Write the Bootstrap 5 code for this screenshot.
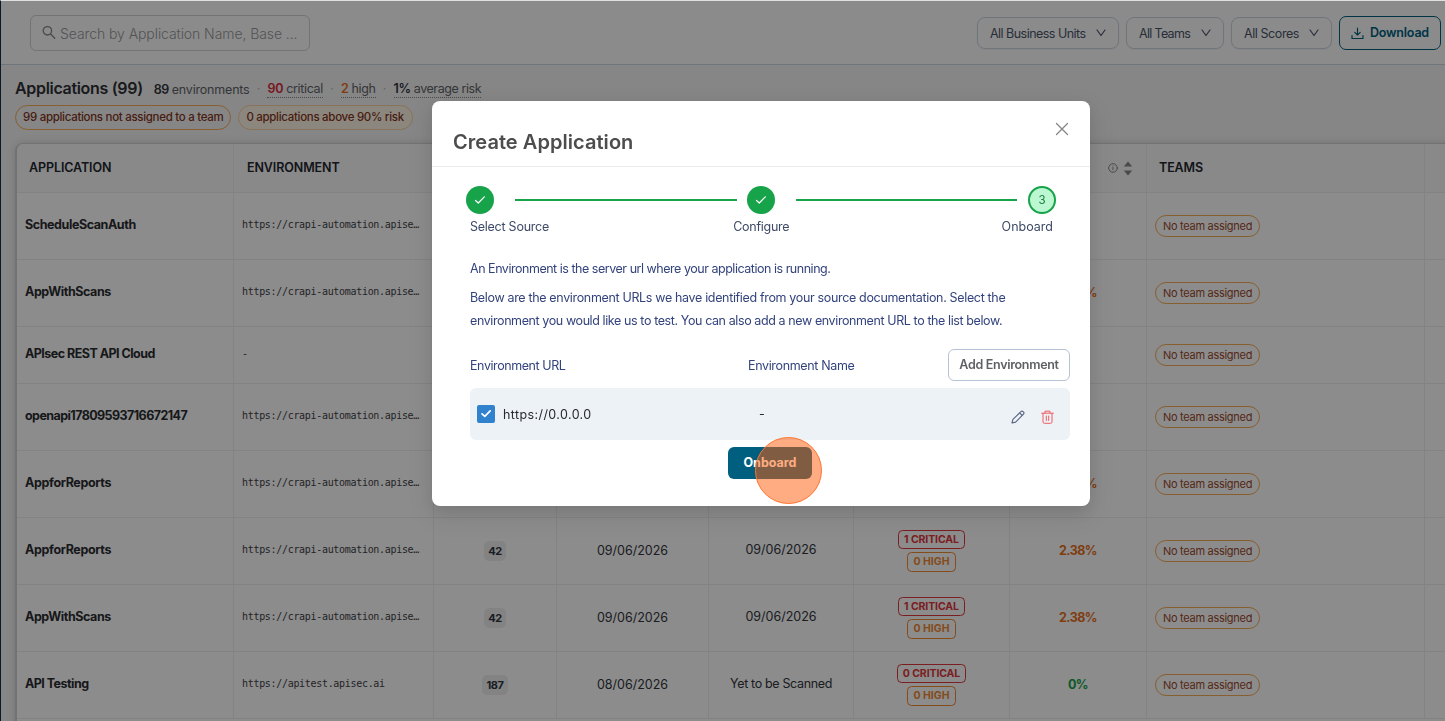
<!DOCTYPE html>
<html lang="en">
<head>
<meta charset="utf-8">
<meta name="viewport" content="width=device-width, initial-scale=1">
<title>Applications</title>
<link href="https://cdn.jsdelivr.net/npm/bootstrap@5.3.0/dist/css/bootstrap.min.css" rel="stylesheet">
<style>
  html, body { height: 100%; overflow: hidden; }
  body { font-family: Inter, "Liberation Sans", sans-serif; font-size: 12.5px; line-height: 18px; letter-spacing: -.35px; color: #32363c; background: #f4f4f4; }
  svg { display: block; flex: none; fill: none; stroke: currentColor; stroke-linecap: round; stroke-linejoin: round; }
  .ls-0 { letter-spacing: 0; }
  .ls-4 { letter-spacing: -.42px; }
  .ls-5 { letter-spacing: -.53px; }
  .ls-7 { letter-spacing: -.68px; }

  .page-shell { height: 721px; border-top: 1px solid #dfe1df; border-left: 1px solid #16304a; overflow: hidden; }
  .toolbar { height: 64px; background: #fefefe; border-bottom: 1px solid #cbd5e1; padding: 0 4px 0 29px; }
  .search-box { width: 280px; height: 36px; border: 1px solid #d0d1d5; border-radius: 6px; padding: 2px 11px 0 10px; color: #98989b; font-size: 14px; font-weight: 300; letter-spacing: -.08px; white-space: nowrap; }
  .search-box svg { color: #85878b; margin: -3px 4px 0 1px; }
  .filter { height: 32px; border: 1px solid #cbd5e1; border-radius: 8px; color: #4a5568; padding: 3px 12px 0 12px; box-shadow: 0 1px 2px rgba(0,0,0,.06); }
  .filter svg { margin-top: -3px; }
  .btn-export { width: 102px; height: 34px; border: 1px solid #00607f; border-radius: 7px; color: #00607f; font-weight: 600; font-size: 12.5px; padding: 1px 0 0; letter-spacing: -.2px; }

  .page-title { font-size: 16px; font-weight: 600; line-height: 20px; letter-spacing: -.32px; color: #2f3135; margin-top: -1px; }
  .stat { border-bottom: 1px dotted #85888d; line-height: 16px; color: #5f6368; padding-top: 2px; }
  .stat b, .plain-stat b { font-weight: 600; color: #32363c; }
  .plain-stat { line-height: 16px; color: #5f6368; letter-spacing: -.2px; }
  .sep-dot { color: #b9bcc0; width: 18px; text-align: center; letter-spacing: 0; }
  .pill { height: 25px; border: 1px solid #f6ad55; border-radius: 13px; color: #83361c; font-size: 11.5px; font-weight: 500; line-height: 22px; letter-spacing: -.3px; padding: 0 7px; white-space: nowrap; }
  .pill-soft { background: #fff6e6; border-color: #f8d0a0; padding: 0 8px 0 7px; letter-spacing: -.3px; }

  .grid-wrap { margin: 13px 0 0 14px; width: 1500px; height: 600px; border: 2px solid #d0d0d0; border-top-width: 1px; border-right: 0; border-radius: 8px 0 0 0; background: #fff; box-shadow: 0 0 8px rgba(0,0,0,.13); overflow: hidden; }
  .app-grid { table-layout: fixed; width: 1478px; border-collapse: separate; border-spacing: 0; }
  .app-grid th, .app-grid td { border-right: 1px solid #efeff0; border-bottom: 1px solid #efeff0; vertical-align: middle; padding: 0 8px; }
  .app-grid th { height: 49px; background: #fafafa; color: #23272f; font-weight: 600; padding: 0 12px; letter-spacing: -.1px; }
  .app-grid td { height: 67px; }
  .app-grid tr.compact td { height: 57px; }
  .app-grid td.app-name { font-weight: 700; color: #2b2d31; padding-bottom: 2px; }
  .app-grid td.env-url { font-family: "DejaVu Sans Mono", monospace; font-size: 10px; letter-spacing: -.31px; color: #3f4247; white-space: nowrap; line-height: 16px; padding-bottom: 2px; }
  .count-tag { display: inline-block; background: #efeff0; border-radius: 5px; color: #2c3440; font-size: 11px; font-weight: 700; line-height: 20px; padding: 0 4px; letter-spacing: -.4px; }
  .sev { display: table; margin: 0 auto; border: 1px solid; border-radius: 4.5px; font-size: 10.5px; font-weight: 700; padding: 0 5px; letter-spacing: -.1px; }
  .sev-crit { color: #e0383c; height: 19px; line-height: 17px; }
  .sev-high { color: #f08a32; height: 20px; line-height: 18px; margin-top: 3px; letter-spacing: 0; }
  .risk { font-weight: 700; letter-spacing: -.5px; color: #e8701c; }
  .risk-ok { color: #16a34a; }
  .team-tag { display: inline-block; border: 1px solid #f6ad55; border-radius: 12px; color: #9c4a2c; font-size: 11px; line-height: 20px; padding: 0 7px; letter-spacing: -.29px; }

  .modal-backdrop.dim { top: 1px; opacity: .45; }
  .create-dialog { margin: 101px 0 0 432px; max-width: 658px; width: 658px; }
  .create-dialog .modal-content { height: 405px; border: 0; border-radius: 8px; box-shadow: 0 6px 16px rgba(0,0,0,.1), 0 9px 28px 8px rgba(0,0,0,.06); }
  .create-dialog .modal-header { height: 66px; padding: 17px 21px 0; border-bottom: 1px solid #ececec; border-radius: 0; }
  .create-dialog .modal-title { font-size: 20px; line-height: 24px; font-weight: 600; letter-spacing: .05px; color: #4d4d4d; }
  .close-x { color: #858585; margin-top: -26px; }
  .step-dot { width: 28px; height: 28px; border-radius: 50%; background: #16a34a; color: #fff; flex: none; }
  .step-now { border: 2px solid #16a34a; background: #bbf7d0; color: #1c7a40; font-size: 11.5px; }
  .step-bar { height: 2px; background: #16a34a; flex: 1 1 0; margin: 0 10px 0 21px; }
  .step-name { color: #3d4a66; letter-spacing: -.25px; }
  .copy { color: #33437d; line-height: 23px; white-space: nowrap; }
  .btn-env { width: 122px; height: 32px; border: 1px solid #b6c2d6; border-radius: 6px; font-size: 12.5px; font-weight: 600; letter-spacing: -.3px; color: #5f6062; padding: 0; }
  .env-row { height: 52px; background: #edf2f7; border-radius: 6px; padding: 0 16px 0 7px; color: #27292d; }
  .tick-box { width: 18px; height: 18px; background: #3182ce; border-radius: 2px; color: #fff; }
  .edit-icon { color: #5a6480; }
  .trash-icon { color: #ee5a5f; }
  .btn-onboard { width: 84px; height: 32px; background: #005f7e; color: #fff; border: 0; border-radius: 6px; font-size: 12.5px; font-weight: 700; padding: 0; letter-spacing: 0; }
  .click-mark { position: absolute; left: 27px; top: -10px; width: 67px; height: 67px; border-radius: 50%; background: rgba(255,90,5,.5); border: 1px solid #ff7430; }
</style>
</head>
<body>
<div class="page-shell">
  <header class="toolbar d-flex align-items-center justify-content-between">
    <div class="search-box d-flex align-items-center">
      <svg width="14" height="15" viewBox="0 0 14 15" stroke-width="1.3"><circle cx="5.4" cy="5.8" r="4.2"/><path d="M8.6 9 12.8 13.2"/></svg>
      <span>Search by Application Name, Base ...</span>
    </div>
    <div class="d-flex align-items-center">
      <div class="filter d-flex align-items-center justify-content-between ls-5" style="width:142px">All Business Units<svg width="10" height="8" viewBox="0 0 10 8" stroke-width="1.2"><path d="M1 1 5 6.5 9 1"/></svg></div>
      <div class="filter d-flex align-items-center justify-content-between ls-7" style="width:98px;margin-left:7px">All Teams<svg width="10" height="8" viewBox="0 0 10 8" stroke-width="1.2"><path d="M1 1 5 6.5 9 1"/></svg></div>
      <div class="filter d-flex align-items-center justify-content-between ls-4" style="width:101px;margin-left:7px;margin-right:7px">All Scores<svg width="10" height="8" viewBox="0 0 10 8" stroke-width="1.2"><path d="M1 1 5 6.5 9 1"/></svg></div>
      <button class="btn btn-export d-flex align-items-center justify-content-center"><svg width="13" height="13" viewBox="0 0 13 13" stroke-width="1.15" style="margin-right:6px"><path d="M6.5 1v6.8M3.8 5.4 6.5 8l2.7-2.6M1 8.5v3h11v-3"/></svg>Download</button>
    </div>
  </header>

  <div class="d-flex align-items-center" style="padding:14px 0 0 14px">
    <span class="page-title">Applications (99)</span>
    <span class="plain-stat" style="margin-left:11px;padding-top:2px"><b class="ls-7">89</b> environments</span>
    <span class="sep-dot">·</span>
    <span class="stat"><b style="color:#d92b3a">90</b> critical</span>
    <span class="sep-dot">·</span>
    <span class="stat"><b style="color:#e8701c">2</b> high</span>
    <span class="sep-dot">·</span>
    <span class="stat ls-4"><b>1%</b> average risk</span>
  </div>
  <div class="d-flex" style="padding:7px 0 0 14px;gap:7px">
    <span class="pill">99 applications not assigned to a team</span>
    <span class="pill pill-soft">0 applications above 90% risk</span>
  </div>

  <div class="grid-wrap">
    <table class="app-grid">
      <colgroup><col style="width:217px"><col style="width:200px"><col style="width:123px"><col style="width:152px"><col style="width:145px"><col style="width:156px"><col style="width:137px"><col style="width:278px"><col style="width:70px"></colgroup>
      <thead>
        <tr><th class="ls-0">APPLICATION</th><th style="padding-left:13px">ENVIRONMENT</th><th></th><th></th><th></th><th></th>
          <th><div class="d-flex justify-content-end align-items-center" style="gap:5px;color:#85878b"><svg width="10" height="10" viewBox="0 0 10 10"><circle cx="5" cy="5" r="4.3"/><path d="M5 4.5v2.3M5 3v.1"/></svg><svg width="10" height="15" viewBox="0 0 10 15" style="margin-right:1px"><path d="M5 .5 9.2 5.5H.8zM5 14.5 .8 9.5h8.4z" fill="currentColor" stroke="none"/></svg></div></th>
          <th class="ls-4">TEAMS</th><th></th></tr>
      </thead>
      <tbody>
        <tr><td class="app-name ls-4">ScheduleScanAuth</td><td class="env-url">https://crapi-automation.apise…</td><td></td><td></td><td></td><td></td><td></td><td><span class="team-tag">No team assigned</span></td><td></td></tr>
        <tr><td class="app-name ls-4">AppWithScans</td><td class="env-url">https://crapi-automation.apise…</td><td></td><td></td><td></td><td></td><td class="risk text-center">2.38%</td><td><span class="team-tag">No team assigned</span></td><td></td></tr>
        <tr class="compact"><td class="app-name ls-5">APIsec REST API Cloud</td><td class="env-url">-</td><td></td><td></td><td></td><td></td><td></td><td><span class="team-tag">No team assigned</span></td><td></td></tr>
        <tr><td class="app-name" style="letter-spacing:-.57px">openapi17809593716672147</td><td class="env-url">https://crapi-automation.apise…</td><td></td><td></td><td></td><td></td><td></td><td><span class="team-tag">No team assigned</span></td><td></td></tr>
        <tr><td class="app-name">AppforReports</td><td class="env-url">https://crapi-automation.apise…</td><td></td><td></td><td></td><td></td><td class="risk text-center">2.38%</td><td><span class="team-tag">No team assigned</span></td><td></td></tr>
        <tr><td class="app-name">AppforReports</td><td class="env-url">https://crapi-automation.apise…</td><td class="text-center"><span class="count-tag">42</span></td><td class="text-center ls-0">09/06/2026</td><td class="text-center ls-0" style="padding-bottom:2px">09/06/2026</td><td><span class="sev sev-crit">1 CRITICAL</span><span class="sev sev-high">0 HIGH</span></td><td class="risk text-center">2.38%</td><td><span class="team-tag">No team assigned</span></td><td></td></tr>
        <tr><td class="app-name ls-4">AppWithScans</td><td class="env-url">https://crapi-automation.apise…</td><td class="text-center"><span class="count-tag">42</span></td><td class="text-center ls-0">09/06/2026</td><td class="text-center ls-0" style="padding-bottom:2px">09/06/2026</td><td><span class="sev sev-crit">1 CRITICAL</span><span class="sev sev-high">0 HIGH</span></td><td class="risk text-center">2.38%</td><td><span class="team-tag">No team assigned</span></td><td></td></tr>
        <tr><td class="app-name ls-5">API Testing</td><td class="env-url">https://apitest.apisec.ai</td><td class="text-center"><span class="count-tag">187</span></td><td class="text-center ls-0">08/06/2026</td><td class="text-center" style="padding-bottom:2px">Yet to be Scanned</td><td><span class="sev sev-crit">0 CRITICAL</span><span class="sev sev-high">0 HIGH</span></td><td class="risk risk-ok text-center">0%</td><td><span class="team-tag">No team assigned</span></td><td></td></tr>
      </tbody>
    </table>
  </div>
</div>

<div class="modal-backdrop dim"></div>
<div class="modal d-block overflow-hidden" tabindex="-1" role="dialog">
  <div class="modal-dialog create-dialog">
    <div class="modal-content">
      <div class="modal-header">
        <h5 class="modal-title">Create Application</h5>
        <svg class="close-x" width="14" height="14" viewBox="0 0 14 14" stroke-width="1.3"><path d="M1.5 1.5l11 11M12.5 1.5l-11 11"/></svg>
      </div>
      <div style="padding:19px 34px 0">
        <div class="d-flex align-items-center">
          <div class="step-dot d-flex align-items-center justify-content-center"><svg width="12" height="12" viewBox="0 0 12 12" stroke-width="1.2"><path d="M1.5 6.5 4.3 9 10.3 2.8"/></svg></div>
          <div class="step-bar"></div>
          <div class="step-dot d-flex align-items-center justify-content-center"><svg width="12" height="12" viewBox="0 0 12 12" stroke-width="1.2"><path d="M1.5 6.5 4.3 9 10.3 2.8"/></svg></div>
          <div class="step-bar" style="margin-right:11px"></div>
          <div class="step-dot step-now d-flex align-items-center justify-content-center">3</div>
        </div>
        <div class="d-flex justify-content-between step-name" style="padding:4px 3px 0 4px">
          <span>Select Source</span><span style="margin-right:28px">Configure</span><span class="ls-0">Onboard</span>
        </div>
      </div>
      <div style="padding:21px 20px 0 38px">
        <div class="copy" style="letter-spacing:-.475px">An Environment is the server url where your application is running.</div>
        <div class="copy" style="margin-top:6px;letter-spacing:-.34px">Below are the environment URLs we have identified from your source documentation. Select the</div>
        <div class="copy" style="letter-spacing:-.4px">environment you would like us to test. You can also add a new environment URL to the list below.</div>
        <div class="d-flex align-items-center copy" style="margin-top:17px">
          <span class="ls-4" style="width:278px">Environment URL</span><span>Environment Name</span>
          <button class="btn btn-env ms-auto">Add Environment</button>
        </div>
        <div class="env-row d-flex align-items-center" style="margin-top:7px">
          <span class="tick-box d-flex align-items-center justify-content-center"><svg width="12" height="12" viewBox="0 0 12 12" stroke-width="1.7"><path d="M2 5.8 4.8 8.4 10.2 2.8"/></svg></span>
          <span style="width:264px;padding:2px 0 0 8px;letter-spacing:.4px">https://0.0.0.0</span>
          <span>-</span>
          <span class="d-flex ms-auto align-items-center" style="gap:16px;padding-top:6px">
            <svg class="edit-icon" width="14" height="14" viewBox="0 0 14 14" stroke-width="1.1"><path d="M1 13l.9-3.6L9.9 1.6a1.5 1.5 0 0 1 2.2 0l.4.4a1.5 1.5 0 0 1 0 2.1L4.6 12.1zM8.6 2.9l2.6 2.6"/></svg>
            <svg class="trash-icon" width="13" height="14" viewBox="0 0 13 14" stroke-width="1"><path d="M.7 3.2h11.6M4 3V1.2h5V3M2 3.4v8.4q0 1.5 1.5 1.5h6q1.5 0 1.5-1.5V3.4M5.3 6v4.5M7.7 6v4.5"/></svg>
          </span>
        </div>
        <div class="position-relative" style="margin:7px 0 0 258px;width:84px">
          <button class="btn btn-onboard d-block">Onboard</button>
          <span class="click-mark"></span>
        </div>
      </div>
    </div>
  </div>
</div>
<script src="https://cdn.jsdelivr.net/npm/bootstrap@5.3.0/dist/js/bootstrap.bundle.min.js"></script>
</body>
</html>
